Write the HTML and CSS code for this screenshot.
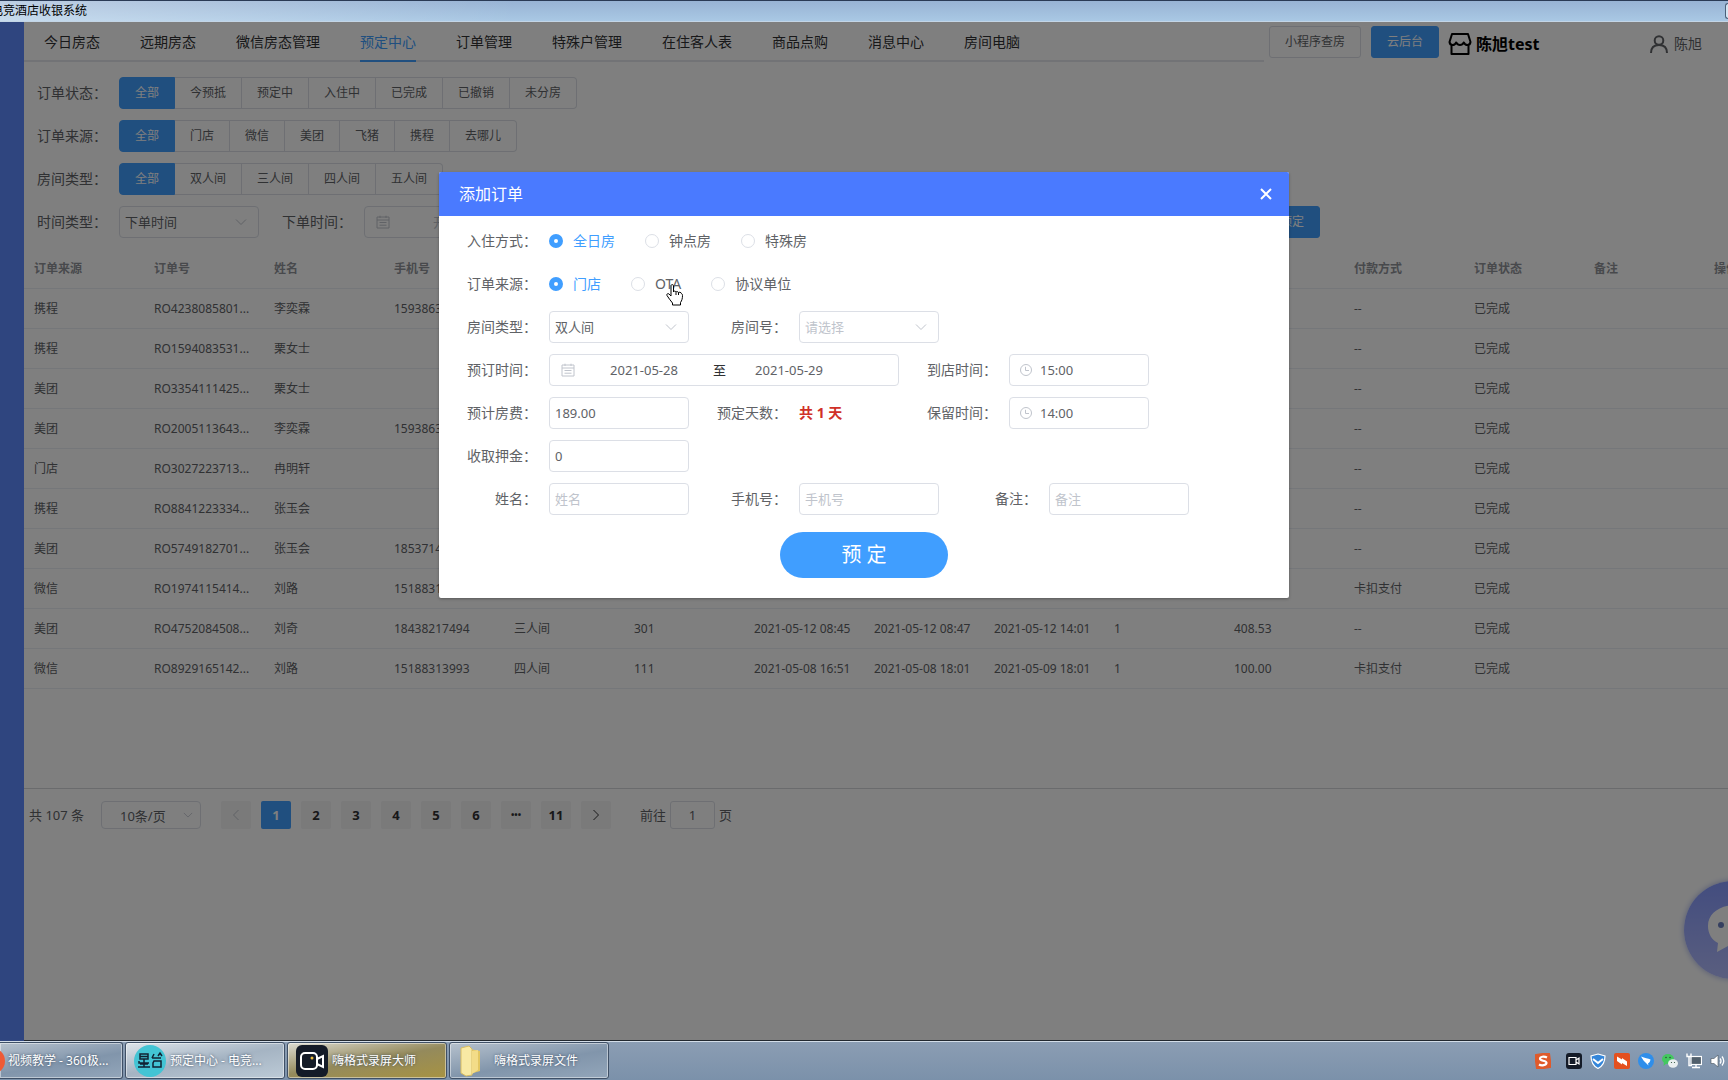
FILE: index.html
```html
<!DOCTYPE html>
<html lang="zh-CN">
<head>
<meta charset="utf-8">
<title>电竞酒店收银系统</title>
<link rel="stylesheet" href="styles.css">
</head>
<body>
<svg class="defs" aria-hidden="true">
  <symbol id="chevron" viewBox="0 0 12 12"><path d="M1 3.500l5 5 5-5" fill="none" stroke="currentColor"/></symbol>
  <symbol id="calendar" viewBox="0 0 14 14"><path d="M1 2h12v11H1zM1 5h12M3.500 7.500h7M3.500 10.200h7M4 .7v2.300M10 .7v2.300" fill="none" stroke="currentColor"/></symbol>
  <symbol id="clock" viewBox="0 0 14 14"><circle cx="7" cy="7" r="5.500" fill="none" stroke="currentColor"/><path d="M6.500 3.800v3.700h3.500" fill="none" stroke="currentColor"/></symbol>
</svg>

<header class="titlebar">
  <span class="titlebar-text">电竞酒店收银系统</span>
  <span class="titlebar-control"></span>
</header>

<div class="app">
  <aside class="sidebar"></aside>
  <main class="main">
    <div class="topbar">
      <nav class="nav">
        <a href="#">今日房态</a><a href="#">远期房态</a><a href="#">微信房态管理</a><a href="#" class="active">预定中心</a><a href="#">订单管理</a><a href="#">特殊户管理</a><a href="#">在住客人表</a><a href="#">商品点购</a><a href="#">消息中心</a><a href="#">房间电脑</a>
      </nav>
      <div class="tools">
        <button class="btn" type="button">小程序查房</button>
        <button class="btn btn-primary" type="button">云后台</button>
        <div class="shop">
          <svg width="24" height="24" viewBox="0 0 24 24" fill="none" stroke="#000" stroke-width="2" stroke-linejoin="round"><path d="M4 2h16l2.500 8c-.3 2-1.400 3-3 3-1.700 0-3-1-3.700-2.500C15 12 14 13 12 13s-3-1-3.800-2.500C7.500 12 6.200 13 4.500 13c-1.600 0-2.700-1-3-3zM3.500 13v9h17v-9"/></svg>
          <strong>陈旭test</strong>
        </div>
        <div class="user">
          <svg width="18" height="18" viewBox="0 0 18 18" fill="none" stroke="#606266" stroke-width="2"><circle cx="9" cy="5.500" r="4.300"/><path d="M1 18c0-5 3-8 8-8s8 3 8 8"/></svg>
          <span>陈旭</span>
        </div>
      </div>
    </div>

    <section class="filters">
      <div class="filter"><span class="filter-label">订单状态<span class="colon">：</span></span>
        <div class="group"><button class="on">全部</button><button>今预抵</button><button>预定中</button><button>入住中</button><button>已完成</button><button>已撤销</button><button>未分房</button></div></div>
      <div class="filter"><span class="filter-label">订单来源<span class="colon">：</span></span>
        <div class="group"><button class="on">全部</button><button>门店</button><button>微信</button><button>美团</button><button>飞猪</button><button>携程</button><button>去哪儿</button></div></div>
      <div class="filter"><span class="filter-label">房间类型<span class="colon">：</span></span>
        <div class="group"><button class="on">全部</button><button>双人间</button><button>三人间</button><button>四人间</button><button>五人间</button></div></div>
      <div class="filter"><label class="filter-label" for="time-type">时间类型<span class="colon">：</span></label>
        <div class="select"><select id="time-type"><option>下单时间</option></select><svg width="12" height="12"><use href="#chevron"/></svg></div>
        <label class="filter-label second" for="order-start">下单时间<span class="colon">：</span></label>
        <div class="range"><svg width="14" height="14"><use href="#calendar"/></svg><input id="order-start" placeholder="开始日期"></div>
        <button class="btn btn-primary reserve" type="button">预定</button>
      </div>
    </section>

    <div class="table-wrap">
      <table>
        <thead><tr><th>订单来源</th><th>订单号</th><th>姓名</th><th>手机号</th><th></th><th></th><th></th><th></th><th></th><th></th><th></th><th>付款方式</th><th>订单状态</th><th>备注</th><th>操作</th></tr></thead>
        <tbody>
          <tr><td>携程</td><td>RO4238085801...</td><td>李奕霖</td><td>1593863</td><td></td><td></td><td></td><td></td><td></td><td></td><td></td><td>--</td><td>已完成</td><td></td><td></td></tr>
          <tr><td>携程</td><td>RO1594083531...</td><td>栗女士</td><td></td><td></td><td></td><td></td><td></td><td></td><td></td><td></td><td>--</td><td>已完成</td><td></td><td></td></tr>
          <tr><td>美团</td><td>RO3354111425...</td><td>栗女士</td><td></td><td></td><td></td><td></td><td></td><td></td><td></td><td></td><td>--</td><td>已完成</td><td></td><td></td></tr>
          <tr><td>美团</td><td>RO2005113643...</td><td>李奕霖</td><td>1593863</td><td></td><td></td><td></td><td></td><td></td><td></td><td></td><td>--</td><td>已完成</td><td></td><td></td></tr>
          <tr><td>门店</td><td>RO3027223713...</td><td>冉明轩</td><td></td><td></td><td></td><td></td><td></td><td></td><td></td><td></td><td>--</td><td>已完成</td><td></td><td></td></tr>
          <tr><td>携程</td><td>RO8841223334...</td><td>张玉会</td><td></td><td></td><td></td><td></td><td></td><td></td><td></td><td></td><td>--</td><td>已完成</td><td></td><td></td></tr>
          <tr><td>美团</td><td>RO5749182701...</td><td>张玉会</td><td>1853714</td><td></td><td></td><td></td><td></td><td></td><td></td><td></td><td>--</td><td>已完成</td><td></td><td></td></tr>
          <tr><td>微信</td><td>RO1974115414...</td><td>刘路</td><td>1518831</td><td></td><td></td><td></td><td></td><td></td><td></td><td></td><td>卡扣支付</td><td>已完成</td><td></td><td></td></tr>
          <tr><td>美团</td><td>RO4752084508...</td><td>刘奇</td><td>18438217494</td><td>三人间</td><td>301</td><td>2021-05-12 08:45</td><td>2021-05-12 08:47</td><td>2021-05-12 14:01</td><td>1</td><td>408.53</td><td>--</td><td>已完成</td><td></td><td></td></tr>
          <tr><td>微信</td><td>RO8929165142...</td><td>刘路</td><td>15188313993</td><td>四人间</td><td>111</td><td>2021-05-08 16:51</td><td>2021-05-08 18:01</td><td>2021-05-09 18:01</td><td>1</td><td>100.00</td><td>卡扣支付</td><td>已完成</td><td></td><td></td></tr>
        </tbody>
      </table>
    </div>

    <div class="pagination">
      <span class="total">共 107 条</span>
      <div class="select page-size"><select aria-label="每页条数"><option>10条/页</option></select><svg width="10" height="10"><use href="#chevron"/></svg></div>
      <div class="pager">
        <button class="arrow" aria-label="上一页" disabled><svg class="prev" width="12" height="12"><use href="#chevron"/></svg></button>
        <button class="current">1</button><button>2</button><button>3</button><button>4</button><button>5</button><button>6</button><button aria-label="更多">•••</button><button>11</button>
        <button class="arrow" aria-label="下一页"><svg class="next" width="12" height="12"><use href="#chevron"/></svg></button>
      </div>
      <label class="jump">前往<input value="1">页</label>
    </div>
  </main>

  <div class="chat">
    <svg width="58" height="50" viewBox="0 0 58 50"><path d="M29 0C12 0 0 8 0 21c0 8 4 14 10 17l-1 9 11-6c3 .7 6 1 9 1 17 0 29-8 29-21S46 0 29 0z" fill="#fff"/><g fill="#6b7ec0"><circle cx="13" cy="20" r="3"/><circle cx="25" cy="20" r="3"/><circle cx="37" cy="20" r="3"/></g></svg>
  </div>

  <div class="overlay">
    <form class="dialog">
      <div class="dialog-head"><span>添加订单</span>
        <button type="button" aria-label="关闭"><svg width="12" height="12" viewBox="0 0 12 12"><path d="M1 1l10 10M11 1L1 11" stroke="#fff" stroke-width="2"/></svg></button></div>
      <div class="dialog-body">
        <div class="row"><span class="label">入住方式<span class="colon">：</span></span><div class="radios">
          <label><input type="radio" name="stay" checked><span>全日房</span></label>
          <label><input type="radio" name="stay"><span>钟点房</span></label>
          <label><input type="radio" name="stay"><span>特殊房</span></label></div></div>
        <div class="row"><span class="label">订单来源<span class="colon">：</span></span><div class="radios">
          <label><input type="radio" name="source" checked><span>门店</span></label>
          <label class="hovered"><input type="radio" name="source"><span>OTA</span>
            <svg class="cursor" width="18" height="22" viewBox="0 0 18 22"><path d="M5 1.500C5 .4 7.500.4 7.500 1.500V8c0-1.300 2.500-1.200 2.500.3 0-1.200 2.500-1 2.500.6 0-1 2.700-1 3 .8.8.3 1 .8 1 1.800 0 3-.6 5-2 7v2.500H6.500V19C4.500 16.500 2.500 14 1 11.500.3 10 2 9 3 10l2 2z" fill="#fff" stroke="#000"/><path d="M10 8.500V11M12.500 9V11" stroke="#000"/></svg></label>
          <label><input type="radio" name="source"><span>协议单位</span></label></div></div>
        <div class="row">
          <label class="label" for="room-type">房间类型<span class="colon">：</span></label><div class="select"><select id="room-type"><option>双人间</option></select><svg width="12" height="12"><use href="#chevron"/></svg></div>
          <label class="label" for="room-no">房间号<span class="colon">：</span></label><div class="select"><select id="room-no" class="empty"><option>请选择</option></select><svg width="12" height="12"><use href="#chevron"/></svg></div></div>
        <div class="row">
          <label class="label" for="date-from">预订时间<span class="colon">：</span></label>
          <div class="range"><svg width="14" height="14"><use href="#calendar"/></svg><input id="date-from" value="2021-05-28"><span>至</span><input class="range-end" aria-label="离店日期" value="2021-05-29"></div>
          <label class="label" for="arrive">到店时间<span class="colon">：</span></label><div class="time"><svg width="14" height="14"><use href="#clock"/></svg><input id="arrive" value="15:00"></div></div>
        <div class="row">
          <label class="label" for="fee">预计房费<span class="colon">：</span></label><input class="field" id="fee" value="189.00">
          <span class="label">预定天数<span class="colon">：</span></span><strong class="days">共 1 天</strong>
          <label class="label" for="hold">保留时间<span class="colon">：</span></label><div class="time"><svg width="14" height="14"><use href="#clock"/></svg><input id="hold" value="14:00"></div></div>
        <div class="row"><label class="label" for="deposit">收取押金<span class="colon">：</span></label><input class="field" id="deposit" value="0"></div>
        <div class="row">
          <label class="label" for="name">姓名<span class="colon">：</span></label><input class="field" id="name" placeholder="姓名">
          <label class="label" for="phone">手机号<span class="colon">：</span></label><input class="field" id="phone" placeholder="手机号">
          <label class="label" for="note">备注<span class="colon">：</span></label><input class="field" id="note" placeholder="备注"></div>
        <button class="submit" type="button">预 定</button>
      </div>
    </form>
  </div>
</div>

<footer class="taskbar">
  <button class="task first"><svg width="8" height="32" viewBox="0 0 8 32"><circle cx="-8" cy="16" r="13" fill="#ee5a36"/></svg><span>视频教学 - 360极...</span></button>
  <button class="task light"><svg width="32" height="32" viewBox="0 0 32 32"><circle cx="16" cy="16" r="16" fill="#43c4d4"/><g fill="none" stroke="#123" stroke-width="1.500"><path d="M6 9h8v5H6zM6 11.500h8M10 14v8M5 16v2h10M6 19h8M4 22h12M18 13h9M20 9l-2 4M24 11l2-3 2 3M20 16h7v6h-8v-4z"/></g></svg><span>预定中心 - 电竞...</span></button>
  <button class="task gold"><svg width="32" height="32" viewBox="0 0 32 32"><rect width="32" height="32" rx="6" fill="#141b28"/><g fill="none" stroke="#fff" stroke-width="2"><rect x="5" y="8" width="16" height="16" rx="4"/><path d="M21 14l6-3v11l-6-3"/></g><circle cx="16" cy="13" r="1.500" fill="#e8b93a"/></svg><span>嗨格式录屏大师</span></button>
  <button class="task"><svg width="32" height="32" viewBox="0 0 32 32"><path d="M12 4l10 2v20l-10 3z" fill="#e3c763"/><path d="M3 3l8-2 3 3v26l-6 1-5-3z" fill="#f8e9a4" stroke="#d8bd62"/><path d="M14 6l6-1v20l-6 4z" fill="#f3dc88"/></svg><span>嗨格式录屏文件</span></button>
  <div class="tray">
    <svg width="16" height="16" viewBox="0 0 16 16"><rect width="16" height="16" rx="2" fill="#df5a2b" transform="rotate(-8 8 8)"/><path d="M12 4.500C9 3 5 3.500 5 5.800s6.500 1.500 6.500 4S6.500 13 4 11.500" fill="none" stroke="#fff" stroke-width="2.200"/></svg>
    <svg width="16" height="16" viewBox="0 0 16 16"><rect width="16" height="16" rx="3" fill="#141b28"/><path d="M3 4.500h7v7H3zM10 7l3-2v6l-3-2" fill="none" stroke="#fff" stroke-width="1.200"/></svg>
    <svg width="16" height="16" viewBox="0 0 16 16"><path d="M8 1l7 2c0 6-2 10-7 12.500C3 13 1 9 1 3z" fill="#3486da" stroke="#fff" stroke-width="1.200"/><path d="M3 6l5 4 5-4" fill="none" stroke="#fff" stroke-width="2"/></svg>
    <svg width="16" height="16" viewBox="0 0 16 16"><rect width="16" height="16" rx="2" fill="#e4501f"/><path d="M3 3.500l5 3 0-1.500 5 3.500v4.500l-5-3v1.500L3 8z" fill="#fff"/></svg>
    <svg width="16" height="16" viewBox="0 0 16 16"><circle cx="8" cy="8" r="8" fill="#2f8eea"/><path d="M3 3.500c4 1.500 7 2 9.500 3-.3 2-1 3-2.500 4l.5 2-5-5z" fill="#fff"/></svg>
    <svg width="16" height="16" viewBox="0 0 16 16"><ellipse cx="6" cy="6" rx="6" ry="5" fill="#43c860"/><path d="M2 9l-.5 4L5 10z" fill="#43c860"/><ellipse cx="11" cy="10.500" rx="5" ry="4.200" fill="#e8eeee"/><g fill="#2b5038"><circle cx="4" cy="4.500" r=".8"/><circle cx="8" cy="4.500" r=".8"/><circle cx="9.500" cy="9.500" r=".6"/><circle cx="12.500" cy="9.500" r=".6"/></g></svg>
    <svg width="16" height="16" viewBox="0 0 16 16"><rect x="5" y="3.500" width="10.500" height="8" fill="#52606c" stroke="#fff" stroke-width="1.200"/><path d="M6 14.500h8M10 12v2M1 .5v3h4v-3M3 4v8.500h3" fill="none" stroke="#fff" stroke-width="1.400"/></svg>
    <svg width="16" height="16" viewBox="0 0 16 16"><path d="M1 5.500h3L8 2v12l-4-3.500H1z" fill="#fff" stroke="#44505c" stroke-width=".6"/><path d="M10 5.500q2 2.500 0 5M12 3.500q3.500 4.500 0 9" fill="none" stroke="#fff" stroke-width="1.300"/></svg>
  </div>
</footer>
</body>
</html>
```

FILE: styles.css
```css
* { box-sizing: border-box; }
body {
  margin: 0;
  min-height: 100vh;
  display: flex;
  flex-direction: column;
  overflow: hidden;
  font: 14px/20px "Noto Sans", "Noto Sans CJK SC", sans-serif;
  color: #606266;
  background: #fff;
}
button, input, select { font: inherit; color: inherit; margin: 0; }
button { padding: 0; border: 0; background: none; white-space: nowrap; }
input { padding: 0; outline: 0; }
a { color: inherit; text-decoration: none; }
svg { flex: none; display: block; }
.defs { position: absolute; width: 0; height: 0; }
.colon { font-family: "Noto Sans CJK TC", sans-serif; line-height: 1; }

.titlebar {
  height: 22px;
  display: flex;
  align-items: center;
  justify-content: space-between;
  overflow: hidden;
  border-top: 1px solid #2a3a55;
  border-bottom: 1px solid #c3d5e6;
  background: linear-gradient(90deg, rgba(255,255,255,.35), rgba(255,255,255,0) 30%), linear-gradient(#98b3d4, #a9c8e4);
}
.titlebar-text { margin-left: -9px; font-size: 12px; color: #000; white-space: nowrap; }
.titlebar-control { width: 3px; height: 16px; border: 1px solid #4a6079; border-right: 0; border-radius: 3px 0 0 3px; background: #d5e4f1; }

.app { position: relative; flex: 1; display: flex; overflow: hidden; }
.sidebar { flex: none; width: 24px; background: #5e8aff; }
.main { flex: 1; min-width: 0; }

.topbar { display: flex; height: 40px; }
.nav { flex: 1; display: flex; gap: 40px; padding-left: 20px; border-bottom: 2px solid #e4e7ed; color: #303133; white-space: nowrap; }
.nav a { height: 40px; line-height: 40px; }
.nav .active { color: #409eff; border-bottom: 2px solid #409eff; }
.tools { display: flex; align-items: center; width: 464px; padding: 0 26px 0 5px; }
.btn { height: 32px; padding: 0 15px; border: 1px solid #dcdfe6; border-radius: 3px; font-size: 12px; }
.btn-primary { margin-left: 10px; border-color: #409eff; background: #409eff; color: #fff; }
.shop, .user { display: flex; align-items: center; padding-top: 4px; }
.shop { gap: 4px; margin-left: 9px; font-size: 16px; color: #000; }
.user { gap: 6px; margin-left: auto; }

.filters { display: flex; flex-direction: column; gap: 11px; padding: 15px 0 0 13px; }
.filter { display: flex; align-items: center; height: 32px; }
.filter-label { width: 70px; margin-right: 12px; white-space: nowrap; }
.second { margin-left: 23px; }
.group { display: flex; }
.group button { height: 32px; padding: 0 15px; border: 1px solid #dcdfe6; border-left: 0; font-size: 12px; }
.group .on { border: 1px solid #409eff; border-radius: 4px 0 0 4px; background: #409eff; color: #fff; }
.group button:last-child { border-radius: 0 4px 4px 0; }
.reserve { margin-left: 550px; }

.select { position: relative; width: 140px; height: 32px; font-size: 13px; }
.select select { appearance: none; width: 100%; height: 100%; padding: 0 5px; border: 1px solid #dcdfe6; border-radius: 4px; background: #fff; outline: 0; }
.select svg { position: absolute; right: 12px; top: 10px; color: #c0c4cc; }
.select .empty { color: #c0c4cc; }

.range { display: flex; align-items: center; width: 350px; height: 32px; padding: 0 11px; border: 1px solid #dcdfe6; border-radius: 4px; font-size: 13px; }
.range svg { color: #c0c4cc; }
.range input { width: 138px; border: 0; text-align: center; background: none; }
.range .range-end { width: 126px; }
.range span { color: #303133; }
::placeholder { color: #c0c4cc; opacity: 1; }

.table-wrap { min-height: 539px; margin-top: 11px; overflow: hidden; }
table { width: 1800px; table-layout: fixed; border-collapse: separate; border-spacing: 0; font-size: 12px; }
th, td { height: 40px; padding: 0 0 0 10px; border-bottom: 1px solid #ebeef5; text-align: left; white-space: nowrap; }
th { color: #909399; font-weight: 700; }

.pagination { display: flex; align-items: center; padding: 12px 5px; border-top: 1px solid #d4d6da; font-size: 13px; line-height: 28px; }
.total { width: 72px; }
.page-size { width: 100px; height: 28px; }
.page-size select { padding: 0 18px; }
.page-size svg { top: 9px; right: 8px; }
.pager { display: flex; gap: 10px; margin: 0 29px 0 20px; }
.pager button { width: 30px; height: 28px; border-radius: 2px; background: #f4f4f5; color: #303133; font-weight: 700; display: flex; align-items: center; justify-content: center; }
.pager button[aria-label="更多"] { font-size: 9px; }
.pager .current { background: #409eff; color: #fff; }
.pager button:disabled { color: #c0c4cc; }
.prev { transform: rotate(90deg); }
.next { transform: rotate(-90deg); }
.jump { display: flex; gap: 4px; }
.jump input { width: 45px; height: 28px; border: 1px solid #dcdfe6; border-radius: 3px; text-align: center; }

.chat { position: absolute; right: -54px; top: 859px; width: 98px; height: 98px; padding: 24px; border-radius: 50%; background: linear-gradient(#869aff, #b4bdff); box-shadow: 0 0 6px #a8b4e8; }

.overlay { position: absolute; inset: 0; display: flex; align-items: flex-start; justify-content: center; padding-top: 150px; background: rgba(0,0,0,.5); }
.dialog { width: 850px; border-radius: 2px; background: #fff; box-shadow: 0 1px 3px rgba(0,0,0,.3); }
.dialog-head { display: flex; align-items: center; justify-content: space-between; height: 44px; padding: 0 17px 0 20px; border-radius: 2px 2px 0 0; background: #4a7aff; color: #fff; font-size: 16px; }
.dialog-body { display: flex; flex-direction: column; gap: 11px; padding: 9px 0 20px; }
.row { display: flex; align-items: center; height: 32px; }
.label { width: 98px; margin-right: 12px; text-align: right; white-space: nowrap; }
.radios { display: flex; gap: 30px; }
.radios label { display: flex; align-items: center; gap: 10px; }
.radios input { appearance: none; width: 14px; height: 14px; border: 1px solid #dcdfe6; border-radius: 50%; background: #fff; }
.radios input:checked { border: 5px solid #409eff; }
.radios input:checked + span { color: #409eff; }
.hovered { position: relative; }
.cursor { position: absolute; left: 35px; top: 10px; }
.field, .time { width: 140px; height: 32px; padding: 0 5px; border: 1px solid #dcdfe6; border-radius: 4px; font-size: 13px; background: #fff; }
.time { display: flex; align-items: center; gap: 7px; padding: 0 9px; color: #c0c4cc; }
.time input { width: 90px; border: 0; color: #606266; }
.days { width: 100px; color: #d03028; }
.submit { align-self: center; width: 168px; height: 46px; margin-top: 6px; border-radius: 23px; background: #409eff; color: #fff; font-size: 20px; }

.taskbar { display: flex; gap: 2px; height: 39px; padding-bottom: 1px; border-top: 1px solid #d3dde8; background: linear-gradient(#8b9db3, #7b91aa); box-shadow: 0 -1px #45505e; }
.task { display: flex; align-items: center; gap: 4px; width: 160px; padding-left: 8px; border: 1px solid #3f5066; border-radius: 3px; box-shadow: inset 0 0 0 1px rgba(255,255,255,.45); background: linear-gradient(170deg, #b6c1cd, #8195ab 55%, #93a6ba); color: #fff; font-size: 12px; text-shadow: 0 0 3px #34465c; }
.first { width: 123px; padding-left: 0; gap: 0; border-left: 0; border-radius: 0 3px 3px 0; }
.light { background: linear-gradient(170deg, #dde4ea, #a5b4c3 50%, #bccad6); }
.gold { background: linear-gradient(170deg, #dcdbd2, #948a5c 50%, #a79342); }
.tray { display: flex; align-items: center; gap: 8px; margin-left: auto; padding-right: 2px; }
.tray svg:first-child { margin-right: 7px; }
```
